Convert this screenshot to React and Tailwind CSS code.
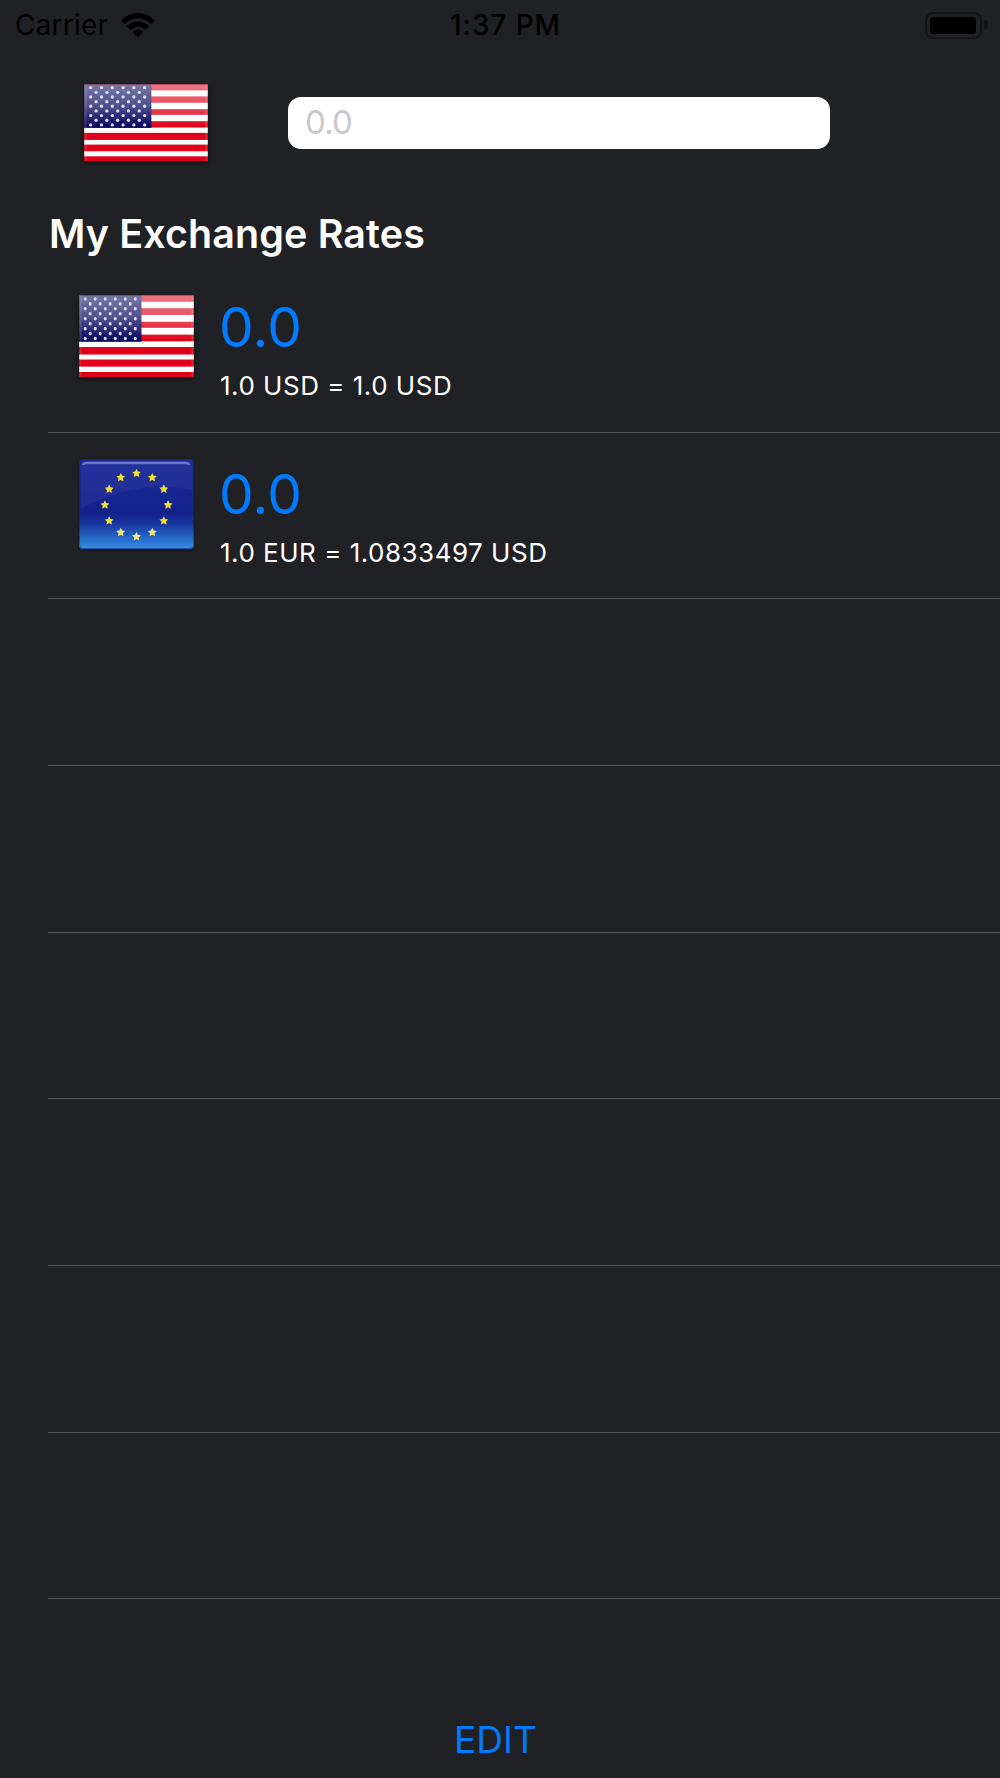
import React from 'react'

const rates = [
  { id: 'usd', flag: 'us', value: '0.0', text: '1.0 USD = 1.0 USD' },
  { id: 'eur', flag: 'eu', value: '0.0', text: '1.0 EUR = 1.0833497 USD' },
]

const emptyRows = [1, 2, 3, 4, 5, 6]

// [top, height] of every red stripe
const stripes = [[0, 19], [37, 19], [75, 17], [111, 19], [146, 21], [181, 20], [216, 14]]

const usStars = []
for (let row = 0; row < 9; row++) {
  const count = row % 2 === 0 ? 6 : 5
  for (let col = 0; col < count; col++) {
    usStars.push([20 + (row % 2 ? 16 : 0) + col * 32.2, 11 + row * 13.9])
  }
}

const starPoints = (cx, cy, r) =>
  Array.from({ length: 10 }, (_, i) => {
    const radius = i % 2 === 0 ? r : r * 0.5
    const a = (Math.PI / 5) * i - Math.PI / 2
    return `${(cx + radius * Math.cos(a)).toFixed(1)},${(cy + radius * Math.sin(a)).toFixed(1)}`
  }).join(' ')

const UsFlag = ({ id, className }) => (
  <svg className={className} viewBox="0 0 370 230" preserveAspectRatio="none">
    <defs>
      <linearGradient id={`${id}-gloss`} x1="0" y1="0" x2="0" y2="1">
        <stop offset="0" stopColor="#fff" stopOpacity="0.46" />
        <stop offset="0.5" stopColor="#fff" stopOpacity="0.3" />
        <stop offset="1" stopColor="#fff" stopOpacity="0" />
      </linearGradient>
      <linearGradient id={`${id}-edge`} x1="0" y1="0" x2="1" y2="0">
        <stop offset="0" stopColor="#400" stopOpacity="0.35" />
        <stop offset="0.015" stopColor="#fff" stopOpacity="0.12" />
        <stop offset="0.03" stopColor="#fff" stopOpacity="0" />
        <stop offset="0.97" stopColor="#fff" stopOpacity="0" />
        <stop offset="0.985" stopColor="#fff" stopOpacity="0.12" />
        <stop offset="1" stopColor="#400" stopOpacity="0.35" />
      </linearGradient>
    </defs>
    <rect width="370" height="230" fill="#fff" />
    {stripes.map(([y, h]) => (
      <rect key={y} y={y} width="370" height={h} fill="#e10019" />
    ))}
    <rect width="201" height="131" fill="#04045c" />
    <rect width="370" height="130" fill={`url(#${id}-gloss)`} />
    {usStars.map(([x, y]) => (
      <circle key={`${x}-${y}`} cx={x} cy={y} r="5" fill="#dcdcee" />
    ))}
    <rect width="370" height="230" fill={`url(#${id}-edge)`} />
    <rect width="370" height="3" fill="#7a2030" fillOpacity="0.45" />
  </svg>
)

const EuFlag = ({ className }) => (
  <svg className={className} viewBox="0 0 346 270" preserveAspectRatio="none">
    <defs>
      <linearGradient id="eu-bg" x1="0" y1="0" x2="0" y2="1">
        <stop offset="0" stopColor="#1a2a98" />
        <stop offset="0.6" stopColor="#14228c" />
        <stop offset="0.7" stopColor="#16309b" />
        <stop offset="0.85" stopColor="#2360c0" />
        <stop offset="1" stopColor="#3490e4" />
      </linearGradient>
    </defs>
    <rect width="346" height="270" rx="12" fill="url(#eu-bg)" />
    <path d="M6 12 Q6 6 14 6 H332 Q340 6 340 12 V92 Q170 60 6 150 Z" fill="#fff" fillOpacity="0.045" />
    <path d="M12 18 Q14 12 22 12 H324 Q330 12 332 18" fill="none" stroke="#6a77c6" strokeWidth="7" />
    <rect x="1.5" y="1.5" width="343" height="267" rx="11" fill="none" stroke="#101c80" strokeOpacity="0.5" strokeWidth="3" />
    {Array.from({ length: 12 }, (_, i) => {
      const a = (Math.PI / 6) * i
      return (
        <polygon
          key={i}
          points={starPoints(173 + 95 * Math.sin(a), 138 - 95 * Math.cos(a), 14)}
          fill={i > 4 && i < 8 ? '#f2e67c' : '#f0e032'}
        />
      )
    })}
  </svg>
)

const StatusBar = () => (
  <div className="grid h-[50px] grid-cols-3 items-center pl-[15px] pr-[12px] text-[28px] leading-none text-black">
    <div className="flex items-center gap-[13px]">
      <span className="tracking-[0.2px]">Carrier</span>
      <svg className="h-[25px] w-[34px]" viewBox="0 0 34 25">
        <path d="M0 7.4 Q17 -7.4 34 7.4 L30.3 11.1 Q17 -.5 3.7 11.1 Z" />
        <path d="M5.8 13.2 Q17 3.4 28.2 13.2 L24.5 16.9 Q17 10.6 9.5 16.9 Z" />
        <path d="M11.6 19 Q17 14.6 22.4 19 L17 24.6 Z" />
      </svg>
    </div>
    <span className="pl-[8px] text-center font-medium tracking-[0.9px]">1:37 PM</span>
    <div className="flex items-center justify-end gap-[2px]">
      <div className="h-[27px] w-[57px] rounded-[8px] border-2 border-[#141517] p-[3px]">
        <div className="h-full w-[46px] rounded-[3px] bg-black" />
      </div>
      <div className="h-[10px] w-[4px] rounded-r-full bg-[#141517]" />
    </div>
  </div>
)

const RateRow = ({ rate }) => (
  <div className="flex h-[166.67px] border-b border-[#58595c] pl-[31px]">
    {rate.flag === 'us' ? (
      <UsFlag id="row" className="mt-[29px] h-[82px] w-[115px] drop-shadow-[0_2px_2px_rgba(0,0,0,0.5)]" />
    ) : (
      <EuFlag className="mt-[26px] h-[90px] w-[115px] drop-shadow-[0_1px_1px_rgba(0,0,0,0.4)]" />
    )}
    <div className="pl-[26px] pt-[28px]">
      <p className="-ml-px text-[55px] leading-[66px] tracking-[0.3px] text-[#007aff]">{rate.value}</p>
      <p className="mt-[10px] text-[26px] leading-[32px] tracking-[0.5px] text-white">{rate.text}</p>
    </div>
  </div>
)

const App = () => {
  return (
    <div className="flex h-[1778px] w-[1000px] flex-col overflow-hidden bg-[#202124] font-['Inter',sans-serif]">
      <StatusBar />

      <div className="flex h-[145px] pl-[84px] pt-[34px]">
        <UsFlag id="base" className="h-[77px] w-[124px] drop-shadow-[0_2px_2px_rgba(0,0,0,0.5)]" />
        <input
          type="text"
          placeholder="0.0"
          className="ml-[80px] mt-[13px] h-[52px] w-[542px] rounded-[13px] bg-white px-[17px] pb-[3px] text-[33px] tracking-[-0.8px] text-black placeholder:text-[#c7c7cc]"
        />
      </div>

      <h1 className="h-[71px] pl-[49px] pt-[15px] text-[39.4px] font-semibold leading-[48px] tracking-[0.15px] text-white">
        My Exchange Rates
      </h1>

      <div className="ml-[48px]">
        {rates.map((rate) => (
          <RateRow key={rate.id} rate={rate} />
        ))}
        {emptyRows.map((row) => (
          <div key={row} className="h-[166.67px] border-b border-[#58595c]" />
        ))}
      </div>

      <button className="mr-[9px] mt-[117px] self-center text-[37px] leading-[48px] text-[#007aff]">
        EDIT
      </button>
    </div>
  )
}

export default App
